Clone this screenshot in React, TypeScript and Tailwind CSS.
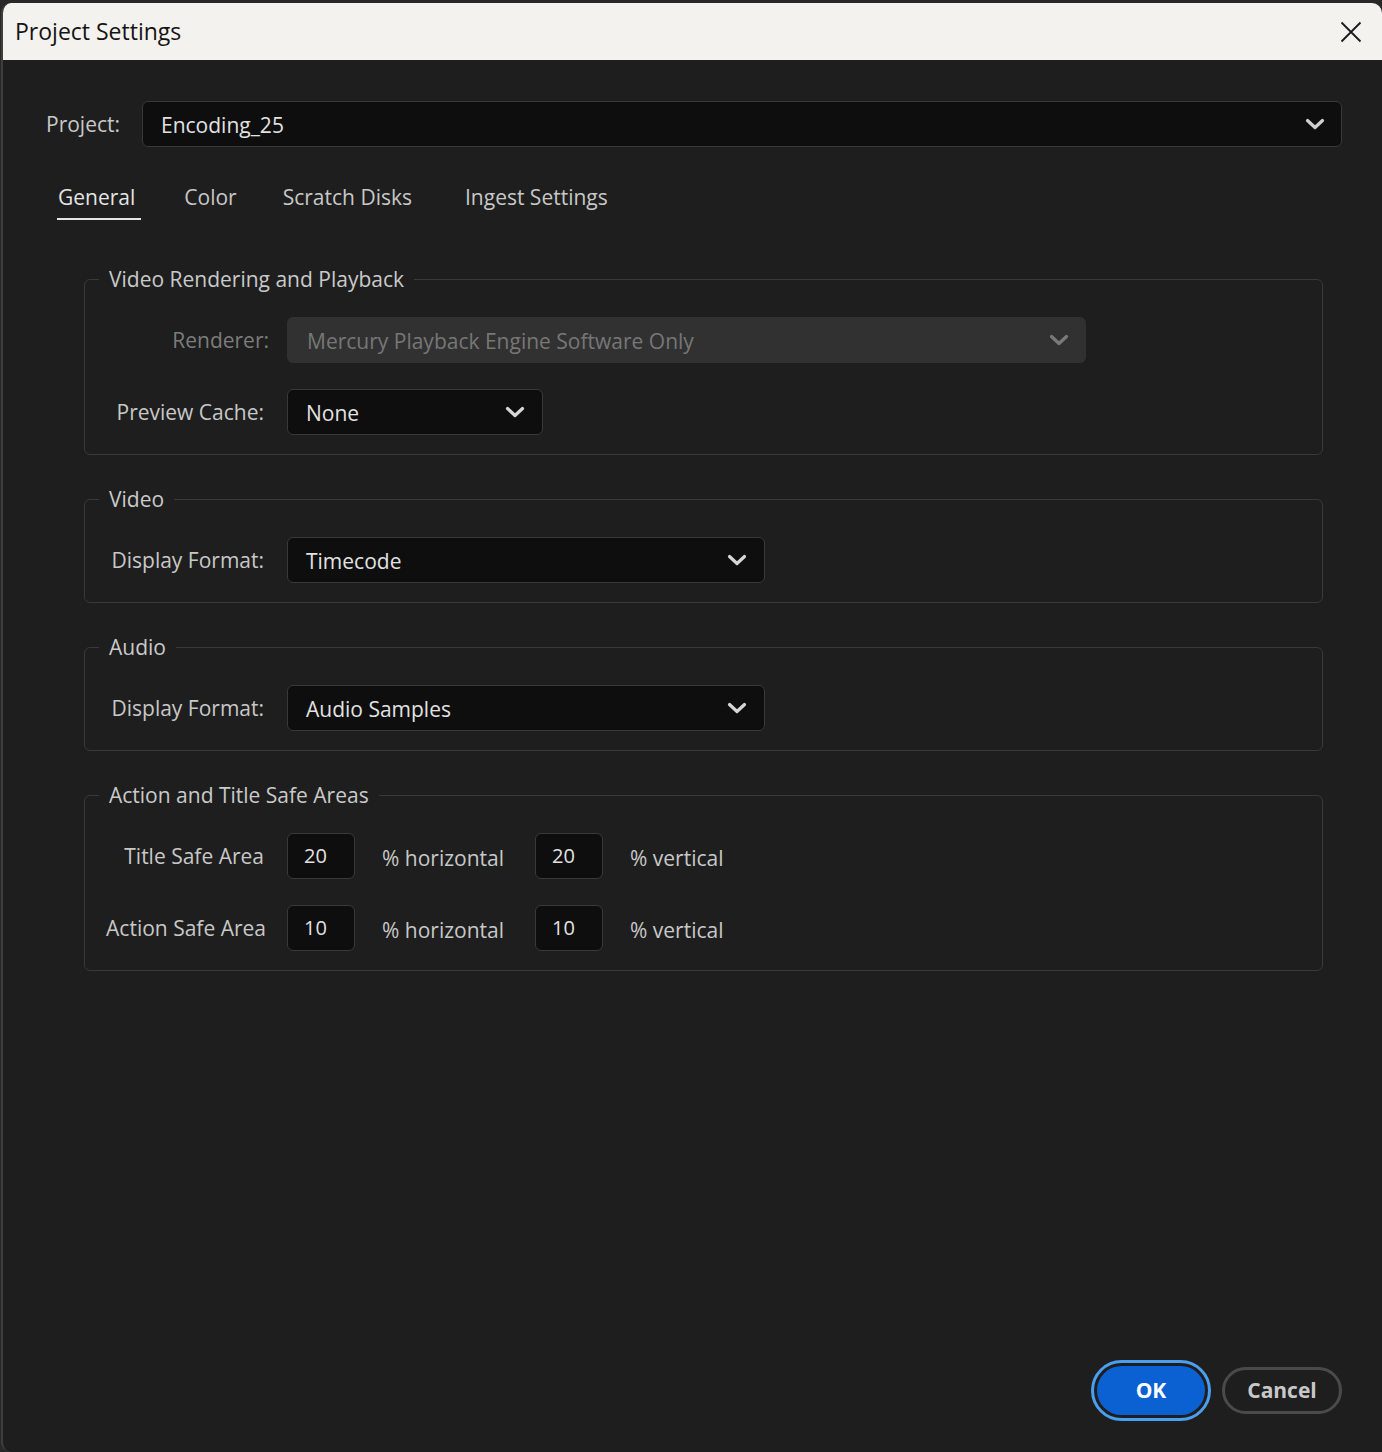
import React from "react";

const FONT = { fontFamily: '"Open Sans", "Noto Sans", "Liberation Sans", sans-serif' };

function Chevron({ color = "#d0d0d0" }: { color?: string }) {
  return (
    <svg width="20" height="12" viewBox="0 0 20 12" fill="none">
      <path d="M2.5 2.5 L10 9.5 L17.5 2.5" stroke={color} strokeWidth="3.2" strokeLinecap="round" strokeLinejoin="round" />
    </svg>
  );
}

function Select({ value, widthClass, disabled = false }: { value: string; widthClass: string; disabled?: boolean }) {
  return (
    <div
      className={
        "h-[46px] rounded-[6px] flex items-center justify-between pr-[17px] " +
        widthClass +
        (disabled ? " pl-[20px] bg-[#313131] text-[#777777]" : " pl-[18px] bg-[#0e0e0e] border border-[#393939] text-[#e2e2e2]")
      }
    >
      <span className="text-[21px] leading-[28px] pt-[2px]">{value}</span>
      <Chevron color={disabled ? "#7a7a7a" : "#d6d6d6"} />
    </div>
  );
}

function NumBox({ value }: { value: string }) {
  return (
    <div className="w-[68px] h-[46px] rounded-[6px] bg-[#0e0e0e] border border-[#393939] flex items-center pl-[16px] text-[20px] text-[#e2e2e2]">
      {value}
    </div>
  );
}

function Group({ title, children }: { title: string; children: React.ReactNode }) {
  return (
    <fieldset className="border border-[#393939] rounded-[6px] ml-[81px] mr-[59px] pb-[19px]">
      <legend className="ml-[14px] px-[10px] text-[21px] leading-[28px] text-[#cacaca]">{title}</legend>
      <div className="pt-[24px] flex flex-col gap-[26px]">{children}</div>
    </fieldset>
  );
}

function Row({
  label,
  children,
  dim = false,
  labelClass = "w-[179px]",
  gapClass = "ml-[23px]",
}: {
  label: string;
  children: React.ReactNode;
  dim?: boolean;
  labelClass?: string;
  gapClass?: string;
}) {
  return (
    <div className="flex items-center">
      <div className={"text-right text-[21px] leading-[28px] " + labelClass + (dim ? " text-[#7c7c7c]" : " text-[#c8c8c8]")}>{label}</div>
      <div className={"flex items-center " + gapClass}>{children}</div>
    </div>
  );
}

export default function App() {
  return (
    <div style={FONT} className="w-[1382px] h-[1452px] bg-[#282828] pt-[3px] pl-[1px] overflow-hidden">
      <div className="h-[1449px] rounded-t-[10px] rounded-bl-[10px] border-l-2 border-[#3e3e3e] bg-[#1e1e1e] flex flex-col overflow-hidden">
        {/* Title bar */}
        <div className="h-[57px] bg-[#f4f2ee] flex items-center justify-between pl-[12px] pr-[20px] shrink-0">
          <span className="text-[23px] text-[#141414]">Project Settings</span>
          <svg width="22" height="22" viewBox="0 0 22 22" fill="none">
            <path d="M1.5 1.5 L20.5 20.5 M20.5 1.5 L1.5 20.5" stroke="#1a1a1a" strokeWidth="1.8" />
          </svg>
        </div>

        {/* Body */}
        <div className="flex-1 flex flex-col">
          {/* Project row */}
          <div className="flex items-center pt-[41px] pl-[43px] pr-[40px]">
            <span className="text-[21px] text-[#c8c8c8] w-[76px] pt-[2px]">Project:</span>
            <div className="ml-[20px] flex-1 h-[46px] rounded-[6px] bg-[#0e0e0e] border border-[#393939] flex items-center justify-between pl-[18px] pr-[16px]">
              <span className="text-[21px] text-[#e2e2e2] pt-[3px]">Encoding_25</span>
              <Chevron />
            </div>
          </div>

          {/* Tabs */}
          <div className="flex pl-[54px] mt-[36px] text-[21px] leading-[28px] text-[#c8c8c8]">
            <div className="flex flex-col items-stretch">
              <span className="pl-[1px] pr-[6px] text-[#e4e4e4]">General</span>
              <div className="mt-[7px] h-[2px] bg-[#e4e4e4]" />
            </div>
            <span className="ml-[43px]">Color</span>
            <span className="ml-[46px]">Scratch Disks</span>
            <span className="ml-[53px]">Ingest Settings</span>
          </div>

          <div className="mt-[45px] flex flex-col gap-[30px]">
            <Group title="Video Rendering and Playback">
              <Row label="Renderer:" dim labelClass="w-[184px]" gapClass="ml-[18px]">
                <Select value="Mercury Playback Engine Software Only" widthClass="w-[799px]" disabled />
              </Row>
              <Row label="Preview Cache:">
                <Select value="None" widthClass="w-[256px]" />
              </Row>
            </Group>

            <Group title="Video">
              <Row label="Display Format:">
                <Select value="Timecode" widthClass="w-[478px]" />
              </Row>
            </Group>

            <Group title="Audio">
              <Row label="Display Format:">
                <Select value="Audio Samples" widthClass="w-[478px]" />
              </Row>
            </Group>

            <Group title="Action and Title Safe Areas">
              <Row label="Title Safe Area">
                <NumBox value="20" />
                <span className="ml-[27px] w-[153px] pt-[6px] text-[21px] text-[#c8c8c8]">% horizontal</span>
                <NumBox value="20" />
                <span className="ml-[27px] pt-[6px] text-[21px] text-[#c8c8c8]">% vertical</span>
              </Row>
              <Row label="Action Safe Area" labelClass="w-[181px]" gapClass="ml-[21px]">
                <NumBox value="10" />
                <span className="ml-[27px] w-[153px] pt-[6px] text-[21px] text-[#c8c8c8]">% horizontal</span>
                <NumBox value="10" />
                <span className="ml-[27px] pt-[6px] text-[21px] text-[#c8c8c8]">% vertical</span>
              </Row>
            </Group>
          </div>

          {/* Buttons */}
          <div className="mt-auto flex justify-end items-center gap-[11px] pr-[40px] pb-[31px]">
            <div className="w-[120px] h-[61px] rounded-full border-[3px] border-[#4b9ff0] p-[3px]">
              <div className="w-full h-full rounded-full bg-[#0b60d2] flex items-center justify-center text-[21px] font-bold text-white">
                OK
              </div>
            </div>
            <div className="w-[120px] h-[47px] rounded-full border-[3px] border-[#4a4a4a] flex items-center justify-center text-[21px] font-bold text-[#c8c8c8]">
              Cancel
            </div>
          </div>
        </div>
      </div>
    </div>
  );
}
